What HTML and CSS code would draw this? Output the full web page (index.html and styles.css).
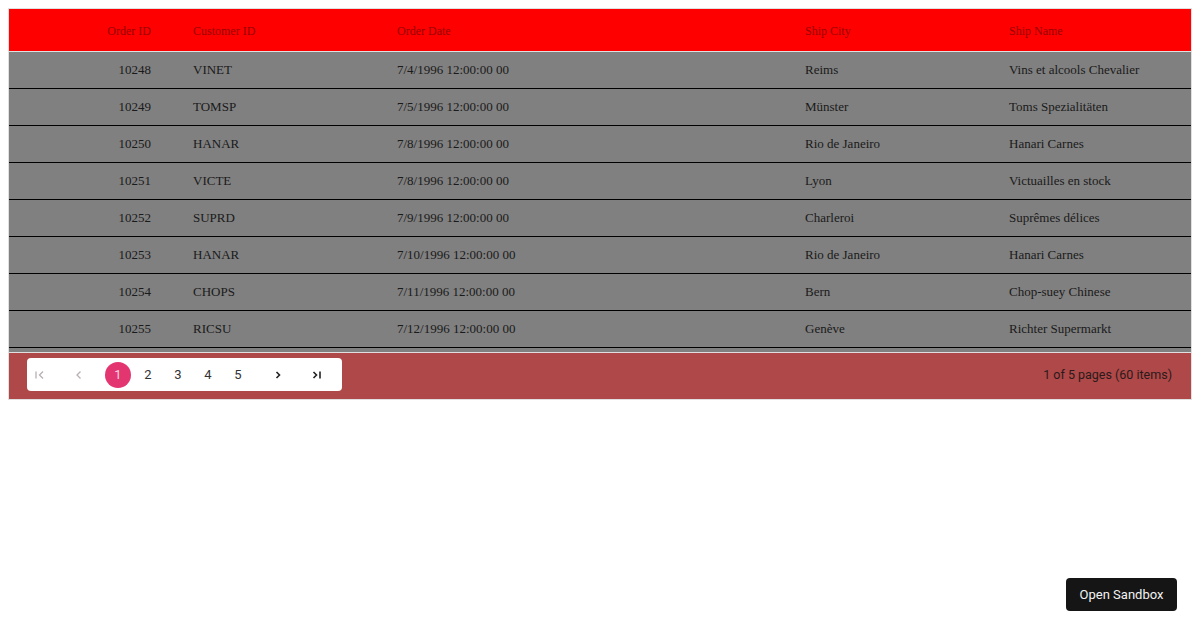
FILE: index.html
```html
<!DOCTYPE html>
<html>
<head>
<meta charset="utf-8">
<link rel="stylesheet" href="styles.css">
</head>
<body>
<div class="grid">
  <div class="row head">
    <div class="cell right">Order ID</div>
    <div class="cell">Customer ID</div>
    <div class="cell">Order Date</div>
    <div class="cell">Ship City</div>
    <div class="cell">Ship Name</div>
  </div>
  <div class="content">
    <div class="row"><div class="cell right">10248</div><div class="cell">VINET</div><div class="cell">7/4/1996 12:00:00 00</div><div class="cell">Reims</div><div class="cell">Vins et alcools Chevalier</div></div>
    <div class="row"><div class="cell right">10249</div><div class="cell">TOMSP</div><div class="cell">7/5/1996 12:00:00 00</div><div class="cell">Münster</div><div class="cell">Toms Spezialitäten</div></div>
    <div class="row"><div class="cell right">10250</div><div class="cell">HANAR</div><div class="cell">7/8/1996 12:00:00 00</div><div class="cell">Rio de Janeiro</div><div class="cell">Hanari Carnes</div></div>
    <div class="row"><div class="cell right">10251</div><div class="cell">VICTE</div><div class="cell">7/8/1996 12:00:00 00</div><div class="cell">Lyon</div><div class="cell">Victuailles en stock</div></div>
    <div class="row"><div class="cell right">10252</div><div class="cell">SUPRD</div><div class="cell">7/9/1996 12:00:00 00</div><div class="cell">Charleroi</div><div class="cell">Suprêmes délices</div></div>
    <div class="row"><div class="cell right">10253</div><div class="cell">HANAR</div><div class="cell">7/10/1996 12:00:00 00</div><div class="cell">Rio de Janeiro</div><div class="cell">Hanari Carnes</div></div>
    <div class="row"><div class="cell right">10254</div><div class="cell">CHOPS</div><div class="cell">7/11/1996 12:00:00 00</div><div class="cell">Bern</div><div class="cell">Chop-suey Chinese</div></div>
    <div class="row"><div class="cell right">10255</div><div class="cell">RICSU</div><div class="cell">7/12/1996 12:00:00 00</div><div class="cell">Genève</div><div class="cell">Richter Supermarkt</div></div>
  </div>
  <div class="pager">
    <div class="pagebox">
      <span class="nav disabled first"><svg width="12" height="12" viewBox="0 0 12 12"><path d="M2 2.5v7M9 2.5L5.5 6 9 9.5" fill="none" stroke="currentColor" stroke-width="1.3"/></svg></span>
      <span class="nav disabled prev"><svg width="12" height="12" viewBox="0 0 12 12"><path d="M7.5 2.5L4 6l3.5 3.5" fill="none" stroke="currentColor" stroke-width="1.3"/></svg></span>
      <span class="num active">1</span>
      <span class="num">2</span>
      <span class="num">3</span>
      <span class="num">4</span>
      <span class="num">5</span>
      <span class="nav next"><svg width="12" height="12" viewBox="0 0 12 12"><path d="M4.5 3L7.5 6l-3 3" fill="none" stroke="currentColor" stroke-width="1.6"/></svg></span>
      <span class="nav last"><svg width="12" height="12" viewBox="0 0 12 12"><path d="M2.5 3L5.5 6l-3 3M9 2.5v7" fill="none" stroke="currentColor" stroke-width="1.6"/></svg></span>
    </div>
    <div class="info">1 of 5 pages (60 items)</div>
  </div>
</div>
<button class="sandbox">Open Sandbox</button>
</body>
</html>
```

FILE: styles.css
```css
html, body { margin: 0; padding: 0; background: #fff; }
body { padding: 8px; height: 630px; box-sizing: border-box; position: relative; }

.grid {
  border: 1px solid #e0e0e0;
  font-family: "Liberation Serif", "Times New Roman", serif;
  font-size: 13px;
  color: #1a1a1a;
}

.row {
  display: grid;
  grid-template-columns: 163px 204px 408px 204px 1fr;
  height: 37px;
  box-sizing: border-box;
  border-bottom: 1px solid #000;
  align-items: center;
}

.head {
  background: #ff0000;
  height: 43px;
  padding-top: 3px;
  border-bottom: 1px solid #e0e0e0;
  color: #940000;
  font-size: 12px;
}

.cell { padding: 0 21px; white-space: nowrap; }
.right { text-align: right; }

.content {
  background: #808080;
  height: 300px;
  border-bottom: 1px solid #e0e0e0;
}

.pager {
  background: #af4848;
  height: 46px;
  display: flex;
  align-items: flex-start;
  justify-content: space-between;
  padding: 5px 19px 0 18px;
  box-sizing: border-box;
  font-family: Roboto, "Liberation Sans", sans-serif;
  font-size: 13px;
}

.pagebox {
  background: #fff;
  border-radius: 4px;
  height: 33px;
  width: 315px;
  display: flex;
  align-items: center;
  box-sizing: border-box;
  padding-left: 7px;
}

.nav {
  display: flex;
  align-items: center;
  justify-content: center;
  width: 12px;
  height: 12px;
  color: #222;
}
.nav.disabled { color: #b8b0b4; }
.first { margin-right: 27px; }
.prev { margin-right: 20px; }
.next { margin-left: 21px; margin-right: 27px; }

.num {
  width: 26px;
  height: 26px;
  display: flex;
  align-items: center;
  justify-content: center;
  color: #333;
  margin-right: 4px;
}
.num:nth-of-type(7) { margin-right: 0; }
.num.active {
  background: #e3356f;
  color: #f3d6e0;
  border-radius: 50%;
}

.info {
  color: #2a1a1a;
  line-height: 33px;
  font-size: 12.5px;
}

.sandbox {
  position: absolute;
  right: 23px;
  bottom: 19px;
  width: 111px;
  height: 33px;
  background: #151515;
  color: #f2f2f2;
  border: none;
  border-radius: 4px;
  font-family: Roboto, "Liberation Sans", sans-serif;
  font-size: 13px;
  padding: 0;
}
```
